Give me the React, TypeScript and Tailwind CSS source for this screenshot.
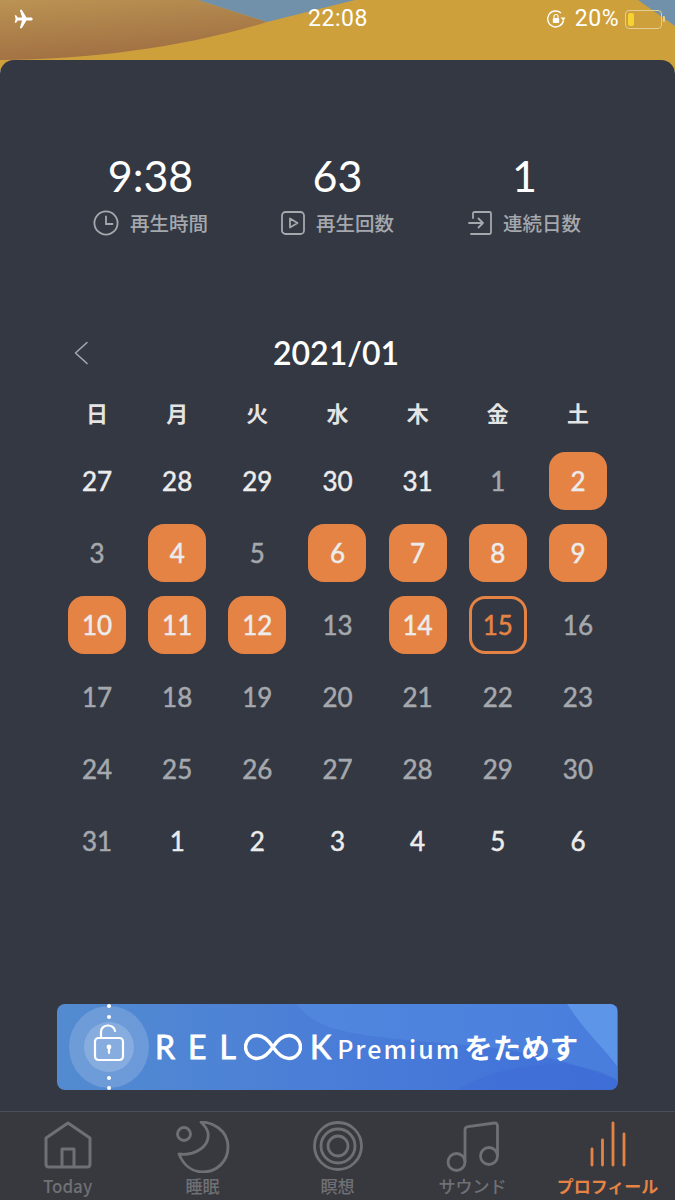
const WEEK = ["日", "月", "火", "水", "木", "金", "土"];

// d: day, s: style  b=bright  m=muted  o=orange  t=today
const DAYS: [number, string][] = [
    [27, "b"], [28, "b"], [29, "b"], [30, "b"], [31, "b"], [1, "m"], [2, "o"],
    [3, "m"], [4, "o"], [5, "m"], [6, "o"], [7, "o"], [8, "o"], [9, "o"],
    [10, "o"], [11, "o"], [12, "o"], [13, "m"], [14, "o"], [15, "t"], [16, "m"],
    [17, "m"], [18, "m"], [19, "m"], [20, "m"], [21, "m"], [22, "m"], [23, "m"],
    [24, "m"], [25, "m"], [26, "m"], [27, "m"], [28, "m"], [29, "m"], [30, "m"],
    [31, "m"], [1, "b"], [2, "b"], [3, "b"], [4, "b"], [5, "b"], [6, "b"],
];

const Wallpaper = () => (
    <svg className="absolute top-0 left-0" width="675" height="70" viewBox="0 0 675 70">
        <defs>
            <linearGradient id="sand" x1="0" y1="0" x2="0.35" y2="1">
                <stop offset="0" stopColor="#bb9353"/>
                <stop offset="1" stopColor="#a06f42"/>
            </linearGradient>
        </defs>
        <rect width="675" height="70" fill="#cea03c"/>
        <path d="M0 0H198L267 22C190 46 90 60 0 60Z" fill="url(#sand)"/>
        <path d="M198 0H355L267 22Z" fill="#7091a9"/>
        <path d="M638 0H675V26Z" fill="#7091a9"/>
    </svg>
);

const StatusBar = () => (
    <div className="relative h-[60px] text-white font-['Roboto',sans-serif]">
        <div className="h-[38px] flex items-center justify-between pl-[13px] pr-[10px]">
            <svg width="22" height="22" viewBox="0 0 24 24" fill="#fff">
                <path d="M21.500 12c0-1-1-1.700-2.200-1.700h-4.600L9.600 2H7.400l2.500 8.300H5.200L3.400 8H1.800l1.100 4-1.100 4h1.600l1.800-2.300h4.700L7.400 22h2.200l5.100-8.300h4.600c1.200 0 2.200-.7 2.200-1.700z"/>
            </svg>
            <div className="absolute left-0 right-0 top-0 h-[38px] flex items-center justify-center pl-[1px] text-[23px] tracking-[0.5px]">22:08</div>
            <div className="flex items-center">
                <svg width="20" height="20" viewBox="0 0 20 20" fill="none" stroke="#fff" strokeWidth="1.400">
                    <path d="M17.500 11.500A8 8 0 1 1 15 4"/>
                    <path d="M14.500 8.500l3 3.200 2-3.200z" fill="#fff" stroke="none"/>
                    <rect x="6.800" y="9" width="6.400" height="5" rx="1" fill="#fff" stroke="none"/>
                    <path d="M8 9V7.500a2 2 0 0 1 4 0V9" strokeWidth="1.100"/>
                </svg>
                <span className="ml-[9px] text-[23px] tracking-[0.5px]">20%</span>
                <div className="ml-[6px] w-[37px] h-[19px] rounded-[4px] border border-[#e2cd92] p-[2px] flex">
                    <div className="w-[6px] rounded-[2px] bg-[#f6d331]"></div>
                </div>
                <div className="ml-[1px] w-[2px] h-[6px] rounded-r-[1px] bg-[#e2cd92]"></div>
            </div>
        </div>
    </div>
);

const Stat = ({value, label, icon}: {value: string; label: string; icon: React.ReactNode}) => (
    <div className="flex flex-col items-center">
        <div className="h-[50px] leading-[50px] text-[43px] text-white font-['Lato',sans-serif]">{value}</div>
        <div className="mt-[8px] h-[28px] flex items-center gap-[11px] text-[19.500px] font-medium text-[#a5a8ad] font-['Noto_Sans_CJK_JP',sans-serif]">
            {icon}
            <span>{label}</span>
        </div>
    </div>
);

const ClockIcon = () => (
    <svg width="26" height="26" viewBox="0 0 26 26" fill="none" stroke="#a5a8ad" strokeWidth="1.800" strokeLinecap="round">
        <circle cx="13" cy="13" r="11.600"/>
        <path d="M13 6.500V14H19.500"/>
    </svg>
);

const PlayIcon = () => (
    <svg width="24" height="24" viewBox="0 0 24 24" fill="none" stroke="#a5a8ad" strokeWidth="1.800" strokeLinejoin="round">
        <rect x="1" y="1" width="22" height="22" rx="3.500"/>
        <path d="M9 7.500L16.500 12L9 16.500Z"/>
    </svg>
);

const EnterIcon = () => (
    <svg width="24" height="24" viewBox="0 0 24 24" fill="none" stroke="#a5a8ad" strokeWidth="1.800" strokeLinecap="round" strokeLinejoin="round">
        <path d="M5 7V2.500C5 1.700 5.700 1 6.500 1H21.500C22.300 1 23 1.700 23 2.500V21.500C23 22.300 22.300 23 21.500 23H3"/>
        <path d="M1 12H15M10.500 7.500L15 12L10.500 16.500"/>
    </svg>
);

const DayCell = ({day, kind}: {day: number; kind: string}) => {
    const box = kind === "o"
        ? "bg-[#e58345] text-[#ececec]"
        : kind === "t"
            ? "border-[3px] border-[#e58345] text-[#e58345]"
            : kind === "b"
                ? "text-[#ececec]"
                : "text-[#a5a8ad]";
    return (
        <div className="h-[72px] flex items-center justify-center">
            <div className={`w-[58px] h-[58px] rounded-[16px] flex items-center justify-center text-[26px] [-webkit-text-stroke:0.5px] font-['Lato',sans-serif] ${box}`}>
                {day}
            </div>
        </div>
    );
};

const Calendar = () => (
    <div>
        <div className="relative h-[40px] flex items-center justify-center pr-[3px] text-[32px] font-semibold text-white font-['Lato',sans-serif]">
            <svg className="absolute left-[16px] top-[8px]" width="16" height="24" viewBox="0 0 16 24" fill="none" stroke="#a5a8ad" strokeWidth="1.600" strokeLinecap="round" strokeLinejoin="round">
                <path d="M14 1.500L2.500 12L14 22.500"/>
            </svg>
            2021/01
        </div>
        <div className="grid grid-cols-7 mt-[23px]">
            {WEEK.map((w) => (
                <div key={w} className="h-[32px] flex items-center justify-center text-[22px] font-bold text-[#e4e4e4] font-['Noto_Sans_CJK_JP',sans-serif]">{w}</div>
            ))}
        </div>
        <div className="grid grid-cols-7 mt-[17px]">
            {DAYS.map(([d, k], i) => <DayCell key={i} day={d} kind={k}/>)}
        </div>
    </div>
);

const Banner = () => (
    <div className="relative h-[86px] rounded-[8px] overflow-hidden bg-gradient-to-r from-[#538bd0] via-[#4a7dd8] to-[#3f6fd8] flex items-center">
        <svg className="absolute inset-0" width="560" height="86" viewBox="0 0 560 86">
            <path d="M240 0C262 30 300 32 420 42C480 48 520 60 560 76V0Z" fill="#5b97e8" fillOpacity="0.35"/>
            <path d="M510 0C530 30 545 42 560 62V0Z" fill="#6aa5f0" fillOpacity="0.6"/>
            <path d="M400 86C440 60 520 50 560 76V86Z" fill="#3d6cd6" fillOpacity="0.5"/>
            <ellipse cx="52" cy="43" rx="40" ry="41" fill="#fff" fillOpacity="0.16"/>
            <circle cx="52" cy="43" r="25" fill="#fff" fillOpacity="0.18"/>
            <g fill="#fff">
                <circle cx="52" cy="2" r="2"/>
                <circle cx="52" cy="13" r="2"/>
                <circle cx="52" cy="74" r="2"/>
                <circle cx="52" cy="84" r="2"/>
            </g>
            <g fill="none" stroke="#fff" strokeWidth="2.200" strokeLinecap="round">
                <rect x="38" y="34" width="28" height="22" rx="3.500"/>
                <path d="M44 34V28A7 6 0 0 1 58 27"/>
            </g>
            <circle cx="52" cy="43" r="2.400" fill="#fff"/>
            <path d="M52 43V49" stroke="#fff" strokeWidth="2.200" strokeLinecap="round"/>
        </svg>
        <div className="relative ml-[98px] flex items-center text-white font-['Noto_Sans_CJK_JP',sans-serif]">
            <span className="text-[32px] leading-none tracking-[13px] [-webkit-text-stroke:0.8px] font-['Lato',sans-serif]">REL</span>
            <svg className="-ml-[5px]" width="58" height="28" viewBox="0 0 58 28" fill="none" stroke="#fff" strokeWidth="3.400">
                <path d="M29 14C24 6.500 19 2.500 13 2.500A11.500 11.500 0 0 0 13 25.500C19 25.500 24 21.500 29 14C34 6.500 39 2.500 45 2.500A11.500 11.500 0 0 1 45 25.500C39 25.500 34 21.500 29 14Z"/>
            </svg>
            <span className="ml-[8px] text-[32px] leading-none [-webkit-text-stroke:0.8px] font-['Lato',sans-serif]">K</span>
            <span className="ml-[6px] mt-[3px] text-[25px] leading-none tracking-[2px] font-medium">Premium</span>
            <span className="ml-[3px] text-[28.500px] leading-none font-bold">をためす</span>
        </div>
    </div>
);

const TabItem = ({label, icon, active}: {label: string; icon: React.ReactNode; active?: boolean}) => (
    <div className="flex flex-col items-center">
        <div className="h-[61px] pt-[9px] flex items-start justify-center">{icon}</div>
        <div className={`h-[26px] leading-[26px] text-[17px] font-['Noto_Sans_CJK_JP',sans-serif] ${active ? "font-bold text-[#e58345]" : "font-medium text-[#6f7074]"}`}>{label}</div>
    </div>
);

const Tabs = () => {
    const c = "#6f7074";
    return (
        <div className="h-[89px] border-t border-[#4d4e58] bg-[#38393f] grid grid-cols-5">
            <TabItem label="Today" icon={
                <svg width="48" height="48" viewBox="0 0 48 48" fill="none" stroke={c} strokeWidth="3" strokeLinejoin="round">
                    <path d="M2 17L24 2L46 17V43C46 45 45 46 43 46H5C3 46 2 45 2 43Z"/>
                    <path d="M18 46V28H30V46"/>
                </svg>
            }/>
            <TabItem label="睡眠" icon={
                <svg width="54" height="52" viewBox="0 0 54 52" fill="none" stroke={c} strokeWidth="2.800" strokeLinejoin="round">
                    <circle cx="8" cy="13" r="6.500"/>
                    <path d="M25 1C35 1 52 8 52 26C52 41 40 51 27 51C15 51 7 43 3 33C18 35 34 26 32 12C31.500 8 28 4 25 1Z"/>
                </svg>
            }/>
            <TabItem label="瞑想" icon={
                <svg width="50" height="50" viewBox="0 0 50 50" fill="none" stroke={c} strokeWidth="2.800">
                    <circle cx="25" cy="25" r="23.500"/>
                    <circle cx="25" cy="25" r="17"/>
                    <circle cx="25" cy="25" r="10"/>
                </svg>
            }/>
            <TabItem label="サウンド" icon={
                <svg width="54" height="52" viewBox="0 0 54 52" fill="none" stroke={c} strokeWidth="2.800" strokeLinejoin="round">
                    <circle cx="10.500" cy="41" r="8.500"/>
                    <circle cx="43" cy="35" r="8.500"/>
                    <path d="M19 41V9C19 7 20 6 22 5.700L48.500 2C50.500 1.800 51.500 3 51.500 5V35"/>
                </svg>
            }/>
            <TabItem active label="プロフィール" icon={
                <svg width="38" height="46" viewBox="0 0 38 46" fill="none" stroke="#e58345" strokeWidth="2.800" strokeLinecap="round">
                    <path d="M3 44V28M13.500 44V19M24 44V2M35 44V13"/>
                </svg>
            }/>
        </div>
    );
};

const App = () => (
    <div className="relative w-[675px] h-[1200px] overflow-hidden flex flex-col">
        <Wallpaper/>
        <StatusBar/>
        <div className="relative flex-1 rounded-t-[14px] bg-[#343842] px-[57px] pt-[91px]">
            <div className="grid grid-cols-3">
                <Stat value="9:38" label="再生時間" icon={<ClockIcon/>}/>
                <Stat value="63" label="再生回数" icon={<PlayIcon/>}/>
                <Stat value="1" label="連続日数" icon={<EnterIcon/>}/>
            </div>
            <div className="mt-[96px]"><Calendar/></div>
            <div className="mt-[127px]"><Banner/></div>
        </div>
        <Tabs/>
    </div>
);

export default App;
